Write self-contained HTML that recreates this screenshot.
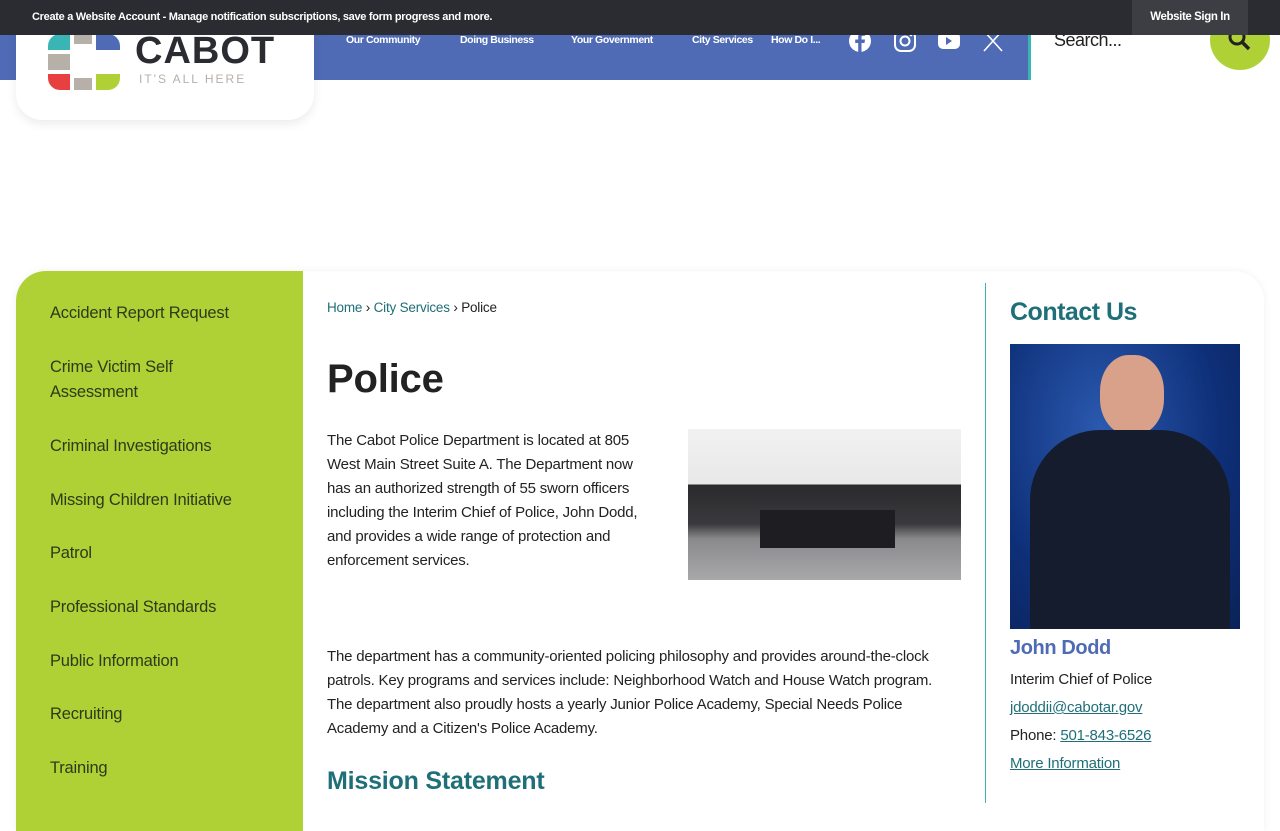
<!DOCTYPE html>
<html><head><meta charset="utf-8"><style>
*{margin:0;padding:0;box-sizing:border-box}
body{width:1280px;height:800px;overflow:hidden;background:#fff;font-family:"Liberation Sans",sans-serif;position:relative}
.top{position:absolute;left:0;top:0;width:1280px;height:35px;background:#2b2c31;color:#fff;font-size:11px;font-weight:bold;letter-spacing:-.3px;z-index:5}
.top .l{position:absolute;left:32px;top:11px}
.top .r{position:absolute;left:1132px;top:0;width:116px;height:35px;background:#3d3e43;text-align:center;line-height:35px;font-size:11.5px;letter-spacing:-.4px}
.band{position:absolute;left:0;top:35px;height:45px;background:#4f6bb5;border-right:3px solid #3ab5b5;width:1031px}
.nav{position:absolute;top:34px;color:#fff;font-size:10.5px;font-weight:bold;letter-spacing:-.4px}
.logo{position:absolute;left:16px;top:20px;width:298px;height:100px;background:#fff;border-radius:0 0 26px 26px;box-shadow:0 4px 10px rgba(0,0,0,.08)}
.card{position:absolute;left:16px;top:271px;width:1248px;height:560px;background:#fff;border-radius:30px 30px 0 0;box-shadow:0 0 8px rgba(0,0,0,.06)}
.side{position:absolute;left:16px;top:271px;width:287px;height:560px;background:#b0d135;border-radius:30px 0 0 0}
.side a{position:absolute;left:34px;color:#2e3a1a;font-size:16.5px;line-height:25px;width:200px;letter-spacing:-.2px}
.main{position:absolute;left:327px;color:#222;font-size:15px;line-height:24px;letter-spacing:-.2px}
a.u{color:#1f6f78;text-decoration:underline}
</style></head><body>
<div class="top"><span class="l">Create a Website Account - Manage notification subscriptions, save form progress and more.</span><span class="r">Website Sign In</span></div>
<div class="band"></div>
<div class="nav" style="left:346px">Our Community</div>
<div class="nav" style="left:460px">Doing Business</div>
<div class="nav" style="left:571px">Your Government</div>
<div class="nav" style="left:692px">City Services</div>
<div class="nav" style="left:771px">How Do I...</div>
<svg style="position:absolute;left:848px;top:29px" width="160" height="24">
<circle cx="12" cy="12" r="11" fill="#fff"/><path d="M13.5 23V14h3l.5-3.5h-3.5V8.5c0-1 .4-1.7 1.8-1.7h1.8V3.7c-.4 0-1.4-.2-2.7-.2-2.6 0-4.2 1.6-4.2 4.4v2.6H7.2V14h3v9z" fill="#4f6bb5"/>
<rect x="47" y="2" width="20" height="20" rx="6" fill="none" stroke="#fff" stroke-width="2"/><circle cx="57" cy="12" r="4.5" fill="none" stroke="#fff" stroke-width="2"/><circle cx="63" cy="6" r="1.3" fill="#fff"/>
<rect x="90" y="3" width="22" height="17" rx="5" fill="#fff"/><path d="M98 8v8l6-4z" fill="#4f6bb5"/>
<path d="M136 2l18 20M154 2l-18 20" stroke="#fff" stroke-width="1.6"/>
</svg>
<div style="position:absolute;left:1054px;top:30px;font-size:18px;color:#222;letter-spacing:-.5px">Search...</div>
<div style="position:absolute;left:1210px;top:10px;width:60px;height:60px;border-radius:50%;background:#b0d135"></div>
<svg style="position:absolute;left:1226px;top:26px" width="28" height="28"><circle cx="11" cy="11" r="7" fill="none" stroke="#222" stroke-width="3"/><path d="M16 16l7 7" stroke="#222" stroke-width="3.5"/></svg>
<div class="logo"></div>
<svg style="position:absolute;left:48px;top:32px" width="72" height="60">
<path d="M0 14a12 12 0 0 1 12-12h10v16H0z" fill="#3ab5b5"/><rect x="26" y="2" width="18" height="10" fill="#b7b0a8"/><path d="M48 2h12a12 12 0 0 1 12 12v4H48z" fill="#4f6bb5"/>
<rect x="0" y="22" width="22" height="16" fill="#b7b0a8"/><path d="M0 42h22v16H12A12 12 0 0 1 0 46z" fill="#e84040"/><rect x="26" y="46" width="18" height="12" fill="#b7b0a8"/><path d="M48 42h24v4a12 12 0 0 1-12 12H48z" fill="#b0d135"/>
</svg>
<div style="position:absolute;left:135px;top:30px;font-size:38px;font-weight:bold;color:#2b2c31;letter-spacing:1px">CABOT</div>
<div style="position:absolute;left:139px;top:72px;font-size:12px;color:#b7b0a8;letter-spacing:2px">IT'S ALL HERE</div>

<div class="card"></div>
<div class="side">
<a style="top:30px">Accident Report Request</a>
<a style="top:84px;width:150px">Crime Victim Self Assessment</a>
<a style="top:163px">Criminal Investigations</a>
<a style="top:217px;width:230px">Missing Children Initiative</a>
<a style="top:270px">Patrol</a>
<a style="top:324px">Professional Standards</a>
<a style="top:378px">Public Information</a>
<a style="top:431px">Recruiting</a>
<a style="top:485px">Training</a>
</div>
<div class="main" style="top:296px;font-size:13.5px"><span style="color:#1f6f78">Home</span> › <span style="color:#1f6f78">City Services</span> › Police</div>
<div class="main" style="top:354px;font-size:40px;line-height:50px;font-weight:bold;color:#222">Police</div>
<div class="main" style="top:429px;width:326px">The Cabot Police Department is located at 805 West Main Street Suite A. The Department now has an authorized strength of 55 sworn officers including the Interim Chief of Police, John Dodd, and provides a wide range of protection and enforcement services.</div>
<div style="position:absolute;left:688px;top:429px;width:273px;height:151px;background:linear-gradient(#f1f1f1 0,#e8e8e8 55px,#2a2a2c 56px,#3a3a3e 95px,#8a8a8c 110px,#a8a8aa 151px)"></div>
<div style="position:absolute;left:760px;top:510px;width:135px;height:38px;background:#1e1e22"></div>
<div class="main" style="top:645px;width:630px">The department has a community-oriented policing philosophy and provides around-the-clock patrols. Key programs and services include: Neighborhood Watch and House Watch program. The department also proudly hosts a yearly Junior Police Academy, Special Needs Police Academy and a Citizen's Police Academy.</div>
<div class="main" style="top:765px;font-size:25px;line-height:32px;font-weight:bold;color:#1f6f78">Mission Statement</div>
<div style="position:absolute;left:985px;top:283px;width:1px;height:520px;background:#3ab5b5"></div>
<div style="position:absolute;left:1010px;top:298px;font-size:25px;font-weight:bold;color:#1f6f78;letter-spacing:-.5px">Contact Us</div>
<div style="position:absolute;left:1010px;top:344px;width:230px;height:285px;background:radial-gradient(ellipse at 40% 30%,#2b5ab0,#0e2f78 60%,#0a2258);overflow:hidden">
<div style="position:absolute;left:90px;top:11px;width:64px;height:80px;border-radius:45%;background:#d9a08a"></div>
<div style="position:absolute;left:20px;top:86px;width:200px;height:199px;border-radius:70px 70px 0 0;background:#141c2e"></div></div>
<div style="position:absolute;left:1010px;top:637px;font-size:20px;font-weight:bold;color:#4f6bb5;letter-spacing:-.4px">John Dodd</div>
<div style="position:absolute;left:1010px;top:666px;font-size:15px;color:#222;line-height:28px;letter-spacing:-.2px">Interim Chief of Police<br><a class="u">jdoddii@cabotar.gov</a><br>Phone: <a class="u">501-843-6526</a><br><a class="u">More Information</a></div>
</body></html>
